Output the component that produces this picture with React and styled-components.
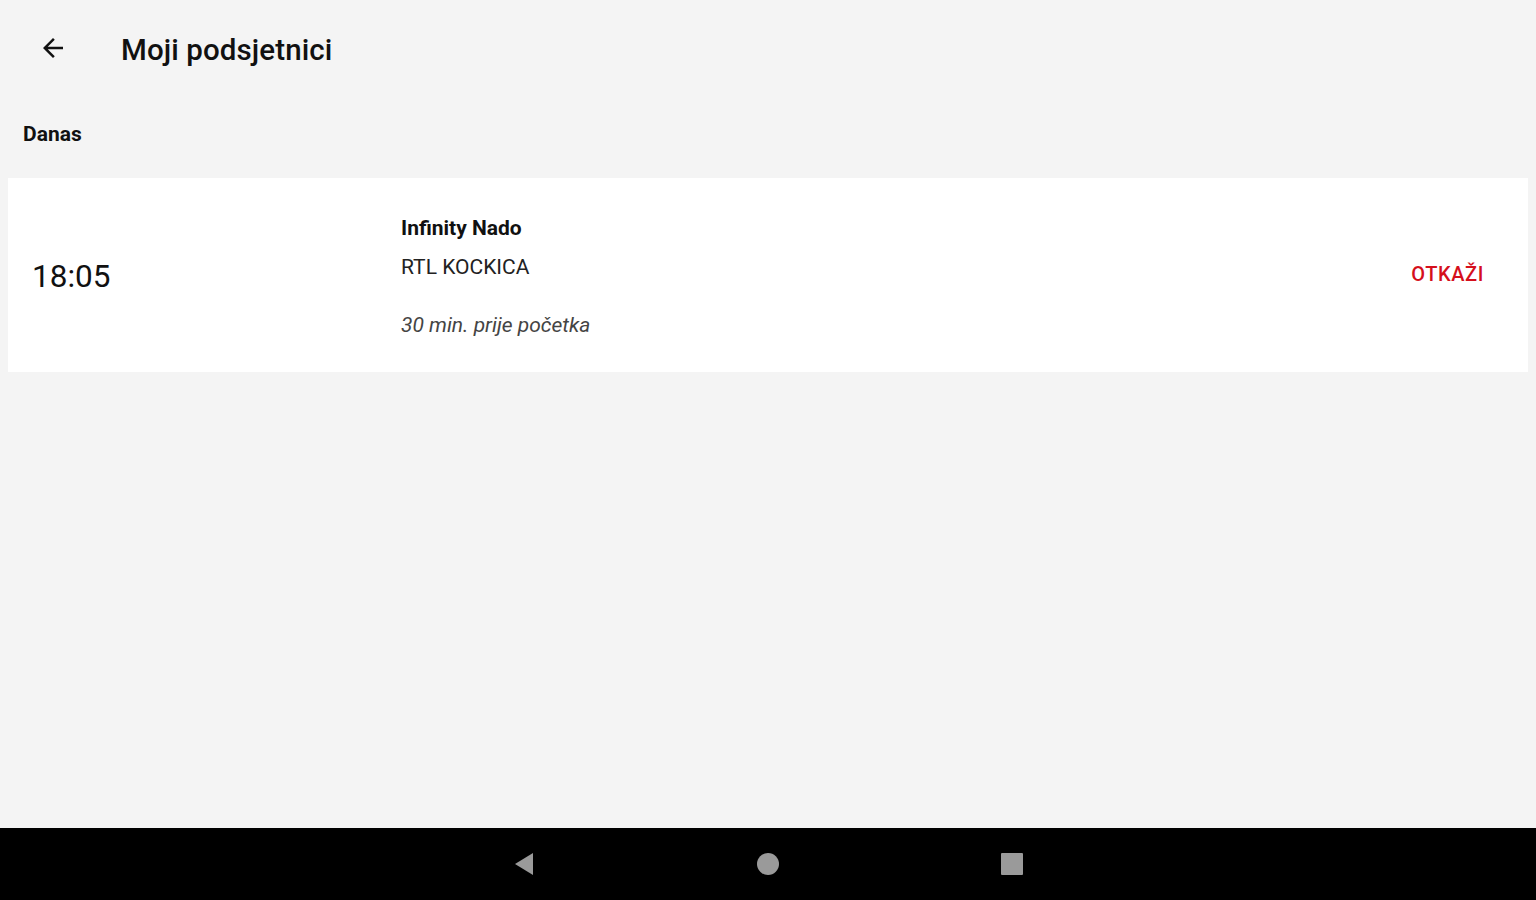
import React from "react";
import styled, { createGlobalStyle } from "styled-components";

const Global = createGlobalStyle`
  html, body { margin: 0; padding: 0; }
  body {
    background: #f4f4f4;
    font-family: Roboto, "Noto Sans", "Liberation Sans", sans-serif;
    color: #111;
  }
`;

const Screen = styled.div`
  width: 1536px;
  height: 900px;
  display: flex;
  flex-direction: column;
  background: #f4f4f4;
  overflow: hidden;
`;

const Content = styled.div`
  flex: 1;
  display: flex;
  flex-direction: column;
`;

const Toolbar = styled.header`
  height: 98px;
  display: flex;
  align-items: center;
  padding: 0 0 0 38px;
  box-sizing: border-box;
`;

const BackButton = styled.button`
  width: 30px;
  height: 30px;
  padding: 0;
  border: none;
  background: none;
  display: flex;
  align-items: center;
  justify-content: center;
  margin-right: 53px;
  margin-top: -2px;
  color: #111;
`;

const Title = styled.h1`
  margin: 0;
  font-size: 29.5px;
  font-weight: 500;
  color: #111;
  letter-spacing: 0.1px;
  margin-top: 2px;
`;

const SectionLabel = styled.div`
  padding: 24px 0 0 23px;
  height: 80px;
  box-sizing: border-box;
  font-size: 21px;
  font-weight: 700;
  color: #111;
`;

const Card = styled.div`
  margin: 0 8px;
  height: 194px;
  background: #ffffff;
  display: flex;
  align-items: center;
  box-sizing: border-box;
  padding: 0 44px 0 24px;
`;

const Time = styled.div`
  width: 369px;
  font-size: 31.5px;
  font-weight: 400;
  color: #111;
  padding-top: 2px;
`;

const Details = styled.div`
  flex: 1;
  display: flex;
  flex-direction: column;
  padding-top: 2px;
`;

const ShowName = styled.div`
  font-size: 21px;
  font-weight: 700;
  color: #111;
  line-height: 24px;
`;

const Channel = styled.div`
  margin-top: 15px;
  font-size: 21px;
  color: #222;
  line-height: 24px;
`;

const Notice = styled.div`
  margin-top: 34px;
  font-size: 21px;
  font-style: italic;
  color: #444;
  line-height: 24px;
`;

const CancelButton = styled.button`
  border: none;
  background: none;
  padding: 0;
  color: #d50f1c;
  font-family: inherit;
  font-size: 20px;
  font-weight: 500;
  letter-spacing: 0.6px;
  margin-top: -2px;
`;

const NavBar = styled.nav`
  height: 72px;
  background: #000;
  display: flex;
  align-items: center;
  justify-content: center;
`;

const NavSlot = styled.div`
  width: 244px;
  display: flex;
  justify-content: center;
`;

export default function App() {
  return (
    <Screen>
      <Global />
      <Content>
        <Toolbar>
          <BackButton aria-label="Natrag">
            <svg width="30" height="30" viewBox="0 0 24 24">
              <path
                d="M20 11H7.83l5.59-5.59L12 4l-8 8 8 8 1.41-1.41L7.83 13H20v-2z"
                fill="#111"
              />
            </svg>
          </BackButton>
          <Title>Moji podsjetnici</Title>
        </Toolbar>
        <SectionLabel>Danas</SectionLabel>
        <Card>
          <Time>18:05</Time>
          <Details>
            <ShowName>Infinity Nado</ShowName>
            <Channel>RTL KOCKICA</Channel>
            <Notice>30 min. prije početka</Notice>
          </Details>
          <CancelButton>OTKAŽI</CancelButton>
        </Card>
      </Content>
      <NavBar>
        <NavSlot>
          <svg width="24" height="26" viewBox="0 0 24 26">
            <path d="M21 2 L3 13 L21 24 Z" fill="#9a9a9a" />
          </svg>
        </NavSlot>
        <NavSlot>
          <svg width="24" height="24" viewBox="0 0 24 24">
            <circle cx="12" cy="12" r="11" fill="#9a9a9a" />
          </svg>
        </NavSlot>
        <NavSlot>
          <svg width="24" height="24" viewBox="0 0 24 24">
            <rect x="1" y="1" width="22" height="22" rx="1" fill="#9a9a9a" />
          </svg>
        </NavSlot>
      </NavBar>
    </Screen>
  );
}
